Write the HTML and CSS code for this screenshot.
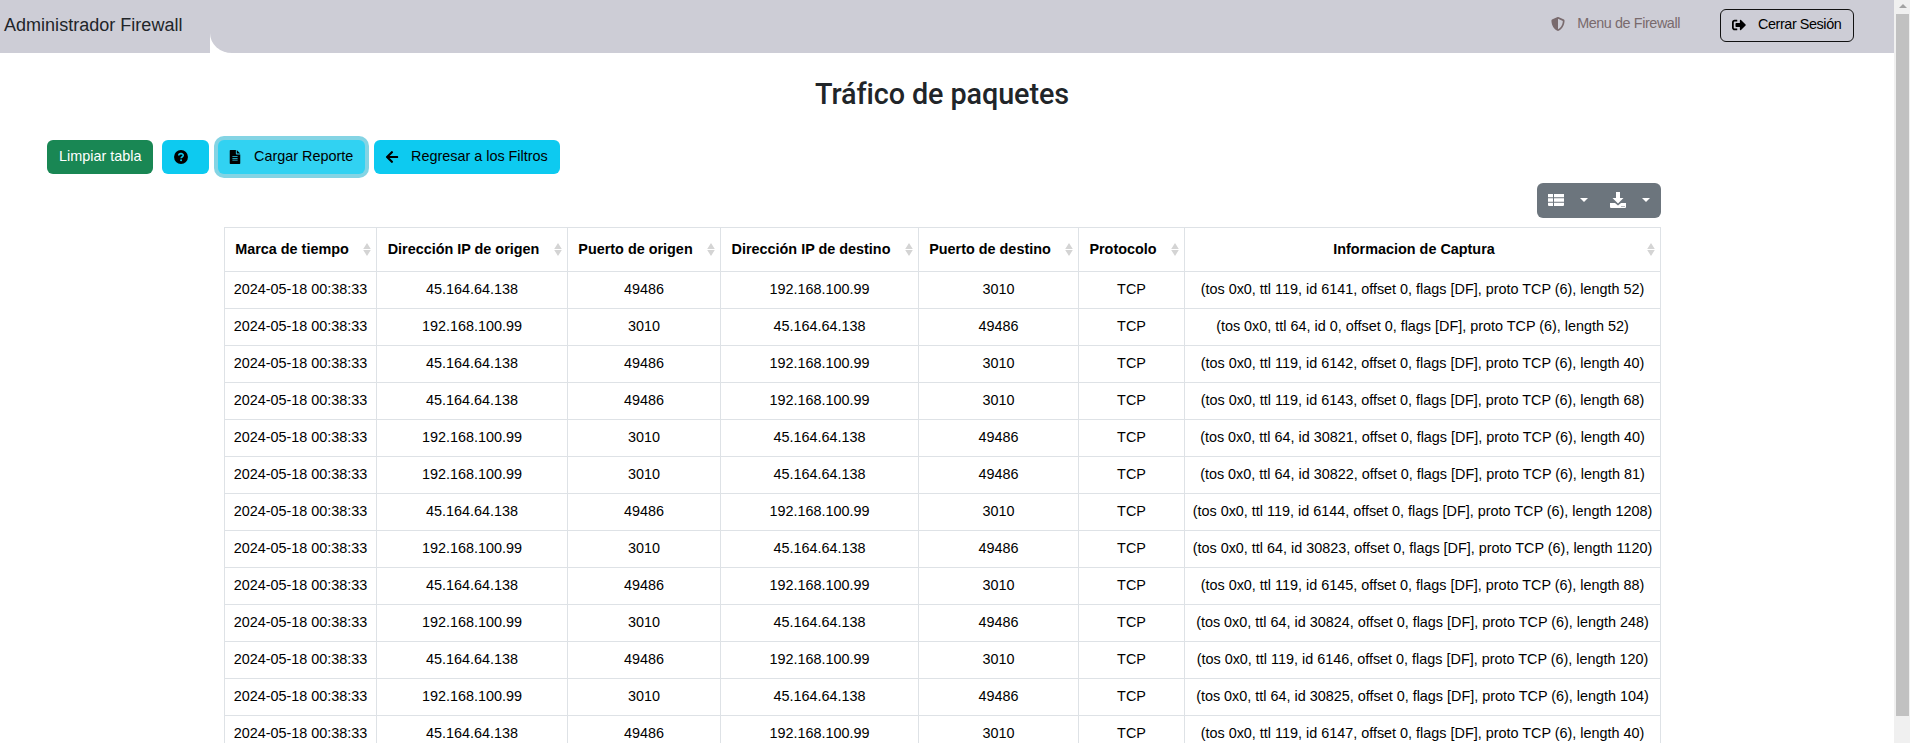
FILE: index.html
```
<!DOCTYPE html>
<html lang="es">
<head>
<meta charset="utf-8">
<title>Administrador Firewall</title>
<link rel="stylesheet" href="styles.css">
</head>
<body>
<div class="page">
<header class="navbar">
  <div class="brand">Administrador Firewall</div>
  <nav class="nav-main">
    <a class="nav-link"><svg class="icon" viewBox="0 0 512 512"><path d="M256 0c5 0 9 1 13 3l188 80c22 9 39 31 39 58-1 99-41 280-213 362-17 8-37 8-54 0C57 421 17 240 16 141c0-27 17-49 39-58L243 3c4-2 8-3 13-3zm0 67v378c138-67 175-214 176-303L256 67z"/></svg><span>Menu de Firewall</span></a>
    <button class="logout"><svg class="icon" viewBox="0 0 512 512"><path d="M497 273 329 441c-15 15-41 5-41-17v-96H152c-13 0-24-11-24-24v-96c0-13 11-24 24-24h136V88c0-21 26-32 41-17l168 168c9 9 9 25 0 34zM192 436v-40c0-7-5-12-12-12H96c-18 0-32-14-32-32V160c0-18 14-32 32-32h84c7 0 12-5 12-12V76c0-7-5-12-12-12H96c-53 0-96 43-96 96v192c0 53 43 96 96 96h84c7 0 12-5 12-12z"/></svg><span>Cerrar Sesión</span></button>
  </nav>
</header>
<main>
  <h1>Tráfico de paquetes</h1>
  <div class="actions">
    <button class="btn green">Limpiar tabla</button>
    <button class="btn help"><svg class="icon" viewBox="0 0 512 512"><circle cx="256" cy="256" r="254"/><path class="question" d="M174 202c0-90 164-94 164-6 0 62-79 56-79 107"/><circle class="dot" cx="259" cy="375" r="36"/></svg></button>
    <button class="btn focused"><svg class="icon" viewBox="0 0 512 512"><path fill-rule="evenodd" d="M64 24Q64 0 88 0h200v136q0 24 24 24h136v328q0 24-24 24H88q-24 0-24-24V24zM320 0 448 128H320zM160 232v28h192v-28zm0 64v28h192v-28zm0 64v28h192v-28z"/></svg><span>Cargar Reporte</span></button>
    <button class="btn back"><svg class="icon" viewBox="0 0 448 512"><path d="m257 444-22 22q-17 17-34 0L7 273q-16-17 0-34L201 46q17-17 34 0l22 22q17 17 0 34L137 216h287q24 0 24 24v32q0 24-24 24H137l120 114q17 17 0 34z"/></svg><span>Regresar a los Filtros</span></button>
  </div>
  <section class="report">
    <div class="tools">
      <div class="tool-group">
        <svg class="tool-icon" viewBox="0 0 16 14"><path d="M0 1h5v3.3H0zm6 0h10v3.3H6zM0 5.3h5v3.4H0zm6 0h10v3.4H6zM0 9.7h5V13H1q-1 0-1-1zm6 0h10V12q0 1-1 1H6z"/></svg><i class="caret"></i>
        <svg class="tool-icon download" viewBox="0 0 16 16"><path d="M6 0h4v6h3.5L8 11.4 2.5 6H6zM0 11h5l3 2.5 3-2.5h5v4q0 1-1 1H1q-1 0-1-1zm11.5 3v1h1v-1zm2 0v1h1v-1z" fill-rule="evenodd"/></svg><i class="caret"></i>
      </div>
    </div>
    <table>
      <colgroup><col class="c1"><col class="c2"><col class="c3"><col class="c4"><col class="c5"><col class="c6"><col class="c7"></colgroup>
      <thead><tr id="heads"></tr></thead>
      <tbody id="rows"></tbody>
    </table>
  </section>
</main>
</div>
<aside class="scrollbar"><i class="arrow"></i><i class="thumb"></i></aside>
<script src="table.js"></script>
</body>
</html>
```
FILE: styles.css
```
* { box-sizing: border-box; }
html, body { height: 100%; overflow: hidden; }
body { margin: 0; display: flex; font: 14.4px/21.6px "Liberation Sans", Arial, sans-serif; color: #000; background: #fff; }
.page { flex: 1; height: 743px; overflow: hidden; }
.navbar { height: 53px; display: flex; background: #fff; }
.brand { width: 210px; padding: 14px 0 0 4px; background: #cdcdd6; color: #212529; font-size: 18px; line-height: 22px; letter-spacing: 0.02px; white-space: nowrap; }
.nav-main { flex: 1; display: flex; justify-content: flex-end; align-items: flex-start; padding: 9px 40px 0 0; background: #cdcdd6; border-bottom-left-radius: 22px 20px; letter-spacing: -0.42px; }
.icon { width: 14px; height: 14px; fill: currentColor; flex: none; }
.nav-link { display: flex; align-items: center; gap: 12px; height: 31px; margin-right: 40px; padding-bottom: 1px; color: #796a6d; }
.logout { display: flex; align-items: center; gap: 12px; width: 134px; height: 33px; padding: 0 0 2px 11px; border: 1px solid #111; border-radius: 6px; background: transparent; color: #000; font: inherit; letter-spacing: inherit; white-space: nowrap; }
h1 { margin: 24px 0 1px; padding-right: 10px; font: 500 28.8px/34px Roboto, sans-serif; letter-spacing: -0.1px; color: #212529; text-align: center; }
.actions { display: flex; gap: 9px; padding: 28px 0 0 47px; }
.btn { display: flex; align-items: center; height: 34px; padding: 0 11px; border: 0; border-radius: 6px; background: #0dcaf0; color: #000; font: inherit; white-space: nowrap; }
.btn .icon { margin-right: 12px; }
.green { width: 106px; padding-left: 12px; background: #198754; color: #fff; }
.help { width: 47px; }
.help .icon { margin-left: 1px; }
.focused { width: 147px; padding-left: 10px; background: #31d2f2; box-shadow: 0 0 0 4px #84d4e4; }
.back { width: 186px; }
.question { fill: none; stroke: #0dcaf0; stroke-width: 56; }
.dot { fill: #0dcaf0; }
.report { width: 1437px; margin: 9px 0 0 224px; }
.tools { display: flex; justify-content: flex-end; }
.tool-group { display: flex; align-items: center; width: 124px; height: 35px; padding: 0 11px 2px; border-radius: 6px; background: #6c757d; color: #fff; }
.tool-icon { width: 16px; height: 14px; fill: #fff; margin-right: 16px; }
.download { width: 16px; height: 16px; margin-left: 22px; }
.caret { border: 4px solid transparent; border-top-color: #fff; border-bottom: 0; }
table { width: 1437px; margin-top: 9px; table-layout: fixed; border-collapse: collapse; text-align: center; }
.c1 { width: 152px; }
.c2 { width: 191px; }
.c3 { width: 153px; }
.c4 { width: 198px; }
.c5 { width: 160px; }
.c6 { width: 106px; }
.c7 { width: 476px; }
th, td { padding: 0; border: 1px solid #dee2e6; white-space: nowrap; }
th { height: 44px; }
td { height: 37px; }
.head { display: flex; align-items: center; padding-right: 5px; }
.head span { flex: 1; padding-right: 4px; }
.sort { width: 8px; height: 13px; fill: #d4d4d4; }
.scrollbar { width: 16px; height: 743px; padding: 4px 1px 0 2px; background: #f0f0f0; display: flex; flex-direction: column; align-items: center; }
.arrow { border: 4px solid transparent; border-top: 0; border-bottom-color: #a3a3a3; }
.thumb { width: 13px; height: 702px; margin-top: 6px; background: #c1c1c1; }
```
FILE: table.js
```
const heads = ["Marca de tiempo", "Dirección IP de origen", "Puerto de origen", "Dirección IP de destino", "Puerto de destino", "Protocolo", "Informacion de Captura"];
// direction, ttl, id, length
const packets = [
  [0, 119, 6141, 52], [1, 64, 0, 52], [0, 119, 6142, 40], [0, 119, 6143, 68],
  [1, 64, 30821, 40], [1, 64, 30822, 81], [0, 119, 6144, 1208], [1, 64, 30823, 1120],
  [0, 119, 6145, 88], [1, 64, 30824, 248], [0, 119, 6146, 120], [1, 64, 30825, 104], [0, 119, 6147, 40]
];
const client = ["45.164.64.138", "49486"];
const server = ["192.168.100.99", "3010"];
document.getElementById("heads").innerHTML = heads.map(h =>
  `<th><div class="head"><span>${h}</span><svg class="sort" viewBox="0 0 7 12"><path d="M3.5 0 7 5.5H0zM0 6.5h7L3.5 12z"/></svg></div></th>`).join("");
document.getElementById("rows").innerHTML = packets.map(([out, ttl, id, len]) => {
  const [a, b] = out ? [server, client] : [client, server];
  const cells = ["2024-05-18 00:38:33", ...a, ...b, "TCP", `(tos 0x0, ttl ${ttl}, id ${id}, offset 0, flags [DF], proto TCP (6), length ${len})`];
  return `<tr>${cells.map(c => `<td>${c}</td>`).join("")}</tr>`;
}).join("");
```
